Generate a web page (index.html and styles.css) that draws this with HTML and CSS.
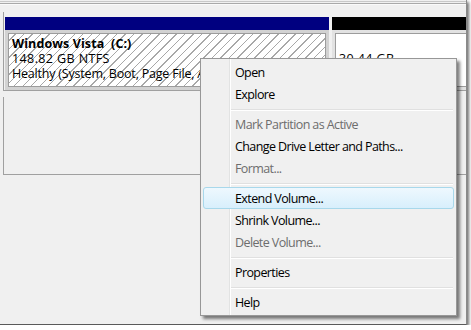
FILE: index.html
```html
<!DOCTYPE html>
<html>
<head>
<meta name="viewport" content="width=device-width, initial-scale=1">
<link rel="stylesheet" href="styles.css">
</head>
<body>

<div class="frame">
  <div class="topbar"></div>

  <div class="disk">
    <div class="part part-c">
      <div class="part-head navy"></div>
      <div class="part-body">
        <div class="part-box hatch">
          <div class="vol-name">Windows Vista&nbsp; (C:)</div>
          <div class="vol-size">148.82 GB NTFS</div>
          <div class="nowrap">Healthy (System, Boot, Page File, Active, Crash Dump, Primary Partition)</div>
        </div>
      </div>
    </div>
    <div class="part part-d">
      <div class="part-head black"></div>
      <div class="part-body">
        <div class="part-box plain">
          <div class="vol-name">&nbsp;</div>
          <div class="vol-size">30.44 GB</div>
        </div>
      </div>
    </div>
  </div>

  <div class="disk disk-empty"></div>

  <!-- context menu -->
  <div class="menu">
    <div class="item">Open</div>
    <div class="item">Explore</div>
    <div class="sep"></div>
    <div class="item disabled">Mark Partition as Active</div>
    <div class="item">Change Drive Letter and Paths...</div>
    <div class="item disabled">Format...</div>
    <div class="sep"></div>
    <div class="item hover">Extend Volume...</div>
    <div class="item">Shrink Volume...</div>
    <div class="item disabled">Delete Volume...</div>
    <div class="sep"></div>
    <div class="item">Properties</div>
    <div class="sep"></div>
    <div class="item">Help</div>
  </div>
</div>

</body>
</html>
```

FILE: styles.css
```css
body {
    margin: 0;
    background-color: #ffffff;
    font-family: "Open Sans", "Noto Sans", sans-serif;
    font-size: 12px;
}

/* Whole window capture with its drop shadow */
.frame {
    position: relative;
    width: 466px;
    height: 324px;
    background-color: #f0f0f0;
    border-right: 1px solid #8a8a8a;
    border-bottom: 1px solid #5a5a5a;
    box-shadow: 2px 2px 3px rgba(0, 0, 0, 0.55);
    overflow: hidden;
}

.topbar {
    height: 12px;
    background:
        linear-gradient(#f0f0f0 0 1px, #c8c8c8 1px 2px, #f0f0f0 2px 3px, #a9a9a9 3px 4px, #fafafa 4px 5px, #f0f0f0 5px);
}

/* Disk rows */
.disk {
    display: flex;
    gap: 3px;
    margin-left: 3px;
    height: 73px;
    padding: 5px 0 0 1px;
    border-left: 1px solid #a0a0a0;
    border-bottom: 1px solid #a0a0a0;
}

.disk-empty {
    margin-top: 6px;
    height: 77px;
    padding: 0;
}

.part {
    display: flex;
    flex-direction: column;
}

.part-c { width: 324px; }
.part-d { flex: 1; }

.part-head { height: 13px; }
.navy { background-color: #000080; }
.black { background-color: #000000; }

.part-body {
    height: 54px;
    padding: 3px;
    background-color: #d2d2d2;
}

.part-d .part-body {
    background-color: #e2e2e2;
    padding-right: 0;
}

.part-box {
    height: 100%;
    box-sizing: border-box;
    border: 1px solid #9c9c9c;
    padding: 2px 3px;
    font-size: 12.5px;
    line-height: 15px;
    color: #000;
    overflow: hidden;
}

.hatch {
    background-color: #ffffff;
    background-image: repeating-linear-gradient(135deg, #ffffff 0 4px, #a8a8a8 4px 5px, #ffffff 5px 6px);
}

.plain {
    background-color: #ffffff;
    border-right: none;
}

.vol-name { font-weight: bold; letter-spacing: 0.1px; }
.vol-size { letter-spacing: 0.4px; }
.nowrap { white-space: nowrap; letter-spacing: -0.2px; }

/* Vista style context menu */
.menu {
    position: absolute;
    left: 200px;
    top: 58px;
    width: 251px;
    padding: 2px;
    border: 1px solid #979797;
    background-color: #f0f0f0;
    background-image: linear-gradient(90deg, transparent 28px, #e2e3e3 28px 29px, #ffffff 29px 30px, transparent 30px);
    box-shadow: 3px 3px 3px rgba(0, 0, 0, 0.5);
}

.item {
    height: 22px;
    line-height: 21px;
    padding-left: 31px;
    border: 1px solid transparent;
    box-sizing: border-box;
    border-radius: 3px;
    font-size: 12.5px;
    letter-spacing: -0.6px;
    color: #000;
    white-space: nowrap;
}

.item.disabled { color: #6d6d6d; }

.item.hover {
    border-color: #a8d8eb;
    background: linear-gradient(#eef8fe, #d8effc);
}

.sep {
    height: 1px;
    margin: 4px 1px 2px 28px;
    background-color: #e0e0e0;
    border-bottom: 1px solid #ffffff;
}
```
